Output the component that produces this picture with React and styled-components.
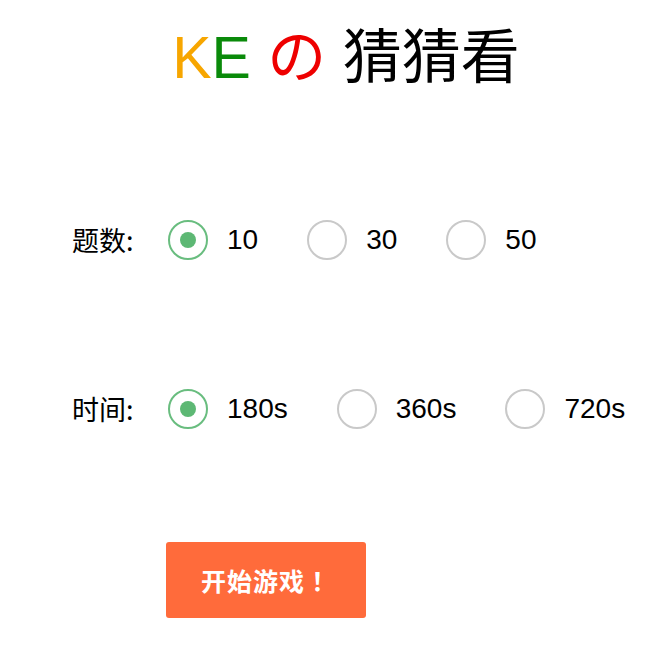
import React, { useState } from "react";
import styled, { createGlobalStyle } from "styled-components";

const Global = createGlobalStyle`
  html, body { margin: 0; padding: 0; background: #fff; }
  body { font-family: "Liberation Sans", Arial, "Noto Sans CJK SC", sans-serif; color: #000; }
`;

const Page = styled.div`
  width: 662px;
  height: 666px;
  box-sizing: border-box;
  padding-top: 22px;
`;

const Title = styled.h1`
  margin: 0;
  padding-left: 30px;
  text-align: center;
  font-size: 59px;
  font-weight: normal;
  line-height: 72px;
  font-family: "Liberation Sans", Arial, "Noto Sans CJK SC", sans-serif;
  white-space: pre;
`;

const Part = styled.span`
  color: ${(p) => p.$color};
`;

const Form = styled.div`
  display: flex;
  flex-direction: column;
  padding-left: 72px;
  margin-top: 126px;
  gap: 129px;
`;

const Row = styled.div`
  display: flex;
  align-items: center;
  height: 40px;
`;

const Label = styled.span`
  flex-shrink: 0;
  width: 96px;
  font-size: 27px;
  font-family: "Noto Sans CJK SC", sans-serif;
  line-height: 40px;
`;

const Option = styled.label`
  flex-shrink: 0;
  display: flex;
  align-items: center;
  margin-right: 49px;
  cursor: pointer;
`;

const Circle = styled.span`
  flex-shrink: 0;
  box-sizing: border-box;
  width: 40px;
  height: 40px;
  border-radius: 50%;
  border: 2px solid ${(p) => (p.$on ? "#69bd7f" : "#c9c9c9")};
  display: flex;
  align-items: center;
  justify-content: center;
  &::after {
    content: "";
    width: 16px;
    height: 16px;
    border-radius: 50%;
    background: #5db874;
    display: ${(p) => (p.$on ? "block" : "none")};
  }
`;

const OptText = styled.span`
  margin-left: 19px;
  font-size: 28px;
  font-family: "Liberation Sans", Arial, sans-serif;
`;

const Button = styled.button`
  margin: 113px 0 0 166px;
  width: 200px;
  height: 76px;
  padding: 0;
  border: none;
  border-radius: 3px;
  background: #ff6b3b;
  color: #fff;
  font-size: 25px;
  font-weight: bold;
  letter-spacing: 1px;
  font-family: "Noto Sans CJK TC", "Noto Sans CJK SC", sans-serif;
  cursor: pointer;
`;

function Radios({ label, options, value, onChange }) {
  return (
    <Row>
      <Label>{label}</Label>
      {options.map((o) => (
        <Option key={o} onClick={() => onChange(o)}>
          <Circle $on={o === value} />
          <OptText>{o}</OptText>
        </Option>
      ))}
    </Row>
  );
}

export default function App() {
  const [count, setCount] = useState("10");
  const [time, setTime] = useState("180s");
  return (
    <Page>
      <Global />
      <Title>
        <Part $color="#f7a600">K</Part>
        <Part $color="#0a8a0a">E</Part>{" "}
        <Part $color="#ee0000">の</Part> 猜猜看
      </Title>
      <Form>
        <Radios label="题数:" options={["10", "30", "50"]} value={count} onChange={setCount} />
        <Radios label="时间:" options={["180s", "360s", "720s"]} value={time} onChange={setTime} />
      </Form>
      <Button>开始游戏！</Button>
    </Page>
  );
}
